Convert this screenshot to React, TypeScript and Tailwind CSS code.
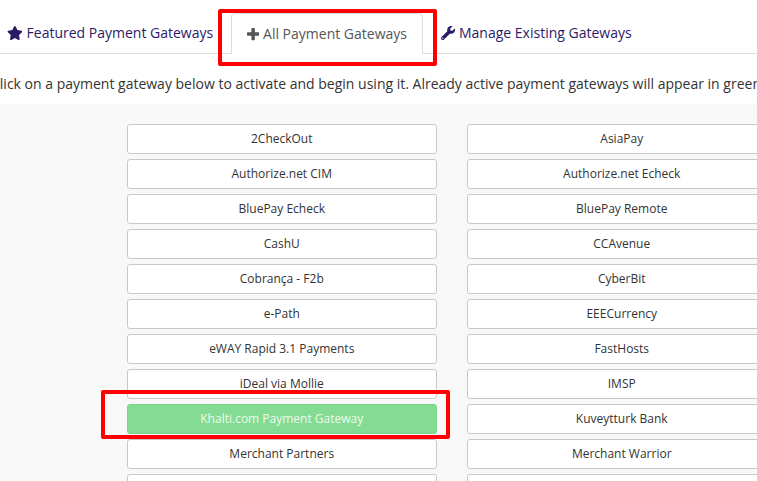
import { FaStar, FaWrench } from "react-icons/fa";

const gateways: [string, string][] = [
  ["2CheckOut", "AsiaPay"],
  ["Authorize.net CIM", "Authorize.net Echeck"],
  ["BluePay Echeck", "BluePay Remote"],
  ["CashU", "CCAvenue"],
  ["Cobrança - F2b", "CyberBit"],
  ["e-Path", "EEECurrency"],
  ["eWAY Rapid 3.1 Payments", "FastHosts"],
  ["iDeal via Mollie", "IMSP"],
  ["Khalti.com Payment Gateway", "Kuveytturk Bank"],
  ["Merchant Partners", "Merchant Warrior"],
  ["", ""],
];

function PlusIcon() {
  return (
    <svg viewBox="0 0 448 512" fill="currentColor" className="mr-[3.8px] h-3.5 w-[12.25px] shrink-0">
      <path d="M448 294.2v-76.4c0-13.3-10.7-24-24-24H286.2V56c0-13.3-10.7-24-24-24h-76.4c-13.3 0-24 10.7-24 24v137.8H24c-13.3 0-24 10.7-24 24v76.4c0 13.3 10.7 24 24 24h137.8V456c0 13.3 10.7 24 24 24h76.4c13.3 0 24-10.7 24-24V318.2H424c13.3 0 24-10.7 24-24z" />
    </svg>
  );
}

function GatewayButton({ name, active = false }: { name: string; active?: boolean }) {
  return (
    <button
      className={`h-[30px] w-full rounded-[3px] border pr-[0.5px] text-center text-[12px] leading-[18px] ${
        active ? "border-[#7dd38c] bg-[#84db93] text-[#edfaef]" : "border-[#c8c8c8] bg-white text-[#333]"
      }`}
    >
      {name}
    </button>
  );
}

export default function App() {
  return (
    <div className="relative h-[481px] w-[757px] overflow-hidden bg-white font-['Open_Sans','Noto_Sans',sans-serif] text-[14px] leading-5 text-[#333]">
      <nav className="flex h-[54px] items-end gap-0.5 border-b border-[#ddd] text-[#2b1a66]">
        <a className="flex h-[41px] w-[229px] shrink-0 items-center whitespace-nowrap pl-[7px]">
          <FaStar className="mr-[3.8px] h-3.5 w-[15.75px] shrink-0" />
          Featured Payment Gateways
        </a>
        <a className="-mb-px flex h-[41px] w-[192px] shrink-0 items-center whitespace-nowrap rounded-t-[4px] border border-b-0 border-[#ddd] bg-white pl-[15px] text-[#555]">
          <PlusIcon />
          All Payment Gateways
        </a>
        <a className="flex h-[41px] shrink-0 items-center whitespace-nowrap pl-4">
          <FaWrench className="mr-1 h-3.5 w-3.5 shrink-0" />
          Manage Existing Gateways
        </a>
      </nav>
      <p className="-ml-[9px] h-[50px] whitespace-nowrap pt-5">
        Click on a payment gateway below to activate and begin using it. Already active payment gateways will appear in green.
      </p>
      <main className="h-[377px] overflow-hidden bg-[#f8f8f8] pl-[127px] pt-5">
        <div className="grid w-[650px] grid-cols-2 gap-x-[30px] gap-y-[5px]">
          {gateways.flatMap(([left, right], row) => [
            <GatewayButton key={`l${row}`} name={left} active={left.startsWith("Khalti")} />,
            <GatewayButton key={`r${row}`} name={right} />,
          ])}
        </div>
      </main>
      <div className="absolute left-[218px] top-[9px] h-[57px] w-[219px] rounded-[2px] border-4 border-[#f00]" />
      <div className="absolute left-[101px] top-[390px] h-[49px] w-[349px] rounded-[2px] border-4 border-[#f00]" />
    </div>
  );
}
